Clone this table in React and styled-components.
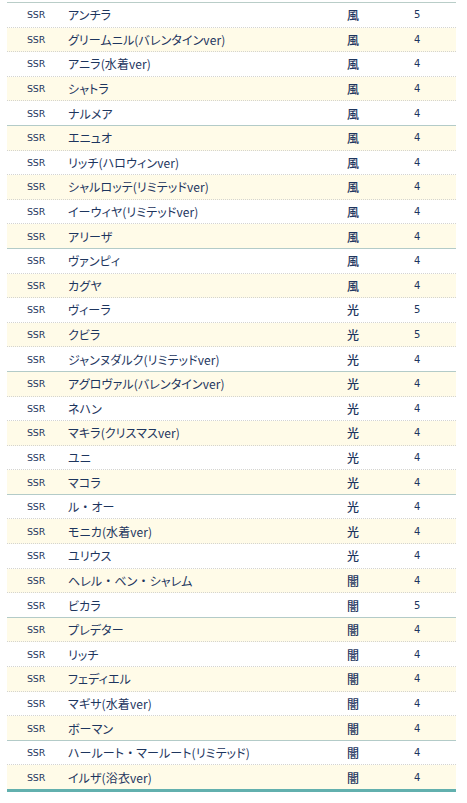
import React from "react";
import styled, { createGlobalStyle } from "styled-components";

const Global = createGlobalStyle`
  html, body { margin: 0; padding: 0; background: #ffffff; }
  body { font-family: "Noto Sans CJK JP", "DejaVu Sans", sans-serif; }
`;

const Page = styled.div`
  padding: 2px 11px 12px 7px;
`;

const Table = styled.div`
  width: 449px;
  border-top: 1px solid #b9cdc8;
  border-bottom: 3px solid #62b0ae;
  color: #1d355e;
`;

const Row = styled.div`
  display: grid;
  grid-template-columns: 61px 279px 66px 1fr;
  align-items: center;
  height: 23.6px;
  background: ${(p) => (p.$alt ? "#fffbe8" : "#ffffff")};
  border-bottom: ${(p) =>
    p.$last ? "none" : p.$group ? "1px solid #b3cbc8" : "1px dotted #d4d4d0"};
`;

const Rarity = styled.span`
  padding-left: 20px;
  font-family: "DejaVu Sans", Verdana, sans-serif;
  font-size: 9.5px;
  letter-spacing: -0.2px;
`;

const Name = styled.span`
  font-family: "Noto Sans CJK JP", sans-serif;
  font-feature-settings: "palt";
  font-size: 12px;
  letter-spacing: 0.1px;
  white-space: nowrap;
`;

const Dot = styled.span`
  font-feature-settings: normal;
`;

const Element = styled.span`
  font-family: "Noto Sans CJK JP", sans-serif;
  font-size: 12px;
  font-weight: 500;
`;

const Num = styled.span`
  padding-left: 1px;
  font-family: "DejaVu Sans", Verdana, sans-serif;
  font-size: 10px;
`;

const data = [
  ["アンチラ", "風", 5],
  ["グリームニル(バレンタインver)", "風", 4],
  ["アニラ(水着ver)", "風", 4],
  ["シャトラ", "風", 4],
  ["ナルメア", "風", 4],
  ["エニュオ", "風", 4],
  ["リッチ(ハロウィンver)", "風", 4],
  ["シャルロッテ(リミテッドver)", "風", 4],
  ["イーウィヤ(リミテッドver)", "風", 4],
  ["アリーザ", "風", 4],
  ["ヴァンピィ", "風", 4],
  ["カグヤ", "風", 4],
  ["ヴィーラ", "光", 5],
  ["クビラ", "光", 5],
  ["ジャンヌダルク(リミテッドver)", "光", 4],
  ["アグロヴァル(バレンタインver)", "光", 4],
  ["ネハン", "光", 4],
  ["マキラ(クリスマスver)", "光", 4],
  ["ユニ", "光", 4],
  ["マコラ", "光", 4],
  ["ル・オー", "光", 4],
  ["モニカ(水着ver)", "光", 4],
  ["ユリウス", "光", 4],
  ["ヘレル・ベン・シャレム", "闇", 4],
  ["ビカラ", "闇", 5],
  ["プレデター", "闇", 4],
  ["リッチ", "闇", 4],
  ["フェディエル", "闇", 4],
  ["マギサ(水着ver)", "闇", 4],
  ["ボーマン", "闇", 4],
  ["ハールート・マールート(リミテッド)", "闇", 4],
  ["イルザ(浴衣ver)", "闇", 4],
];

function renderName(name) {
  const parts = name.split("・");
  return parts.map((p, i) => (
    <React.Fragment key={i}>
      {i > 0 && <Dot>・</Dot>}
      {p}
    </React.Fragment>
  ));
}

export default function App() {
  return (
    <Page>
      <Global />
      <Table>
        {data.map(([name, el, n], i) => (
          <Row
            key={i}
            $alt={i % 2 === 1}
            $group={(i + 1) % 5 === 0}
            $last={i === data.length - 1}
          >
            <Rarity>SSR</Rarity>
            <Name>{renderName(name)}</Name>
            <Element>{el}</Element>
            <Num>{n}</Num>
          </Row>
        ))}
      </Table>
    </Page>
  );
}
